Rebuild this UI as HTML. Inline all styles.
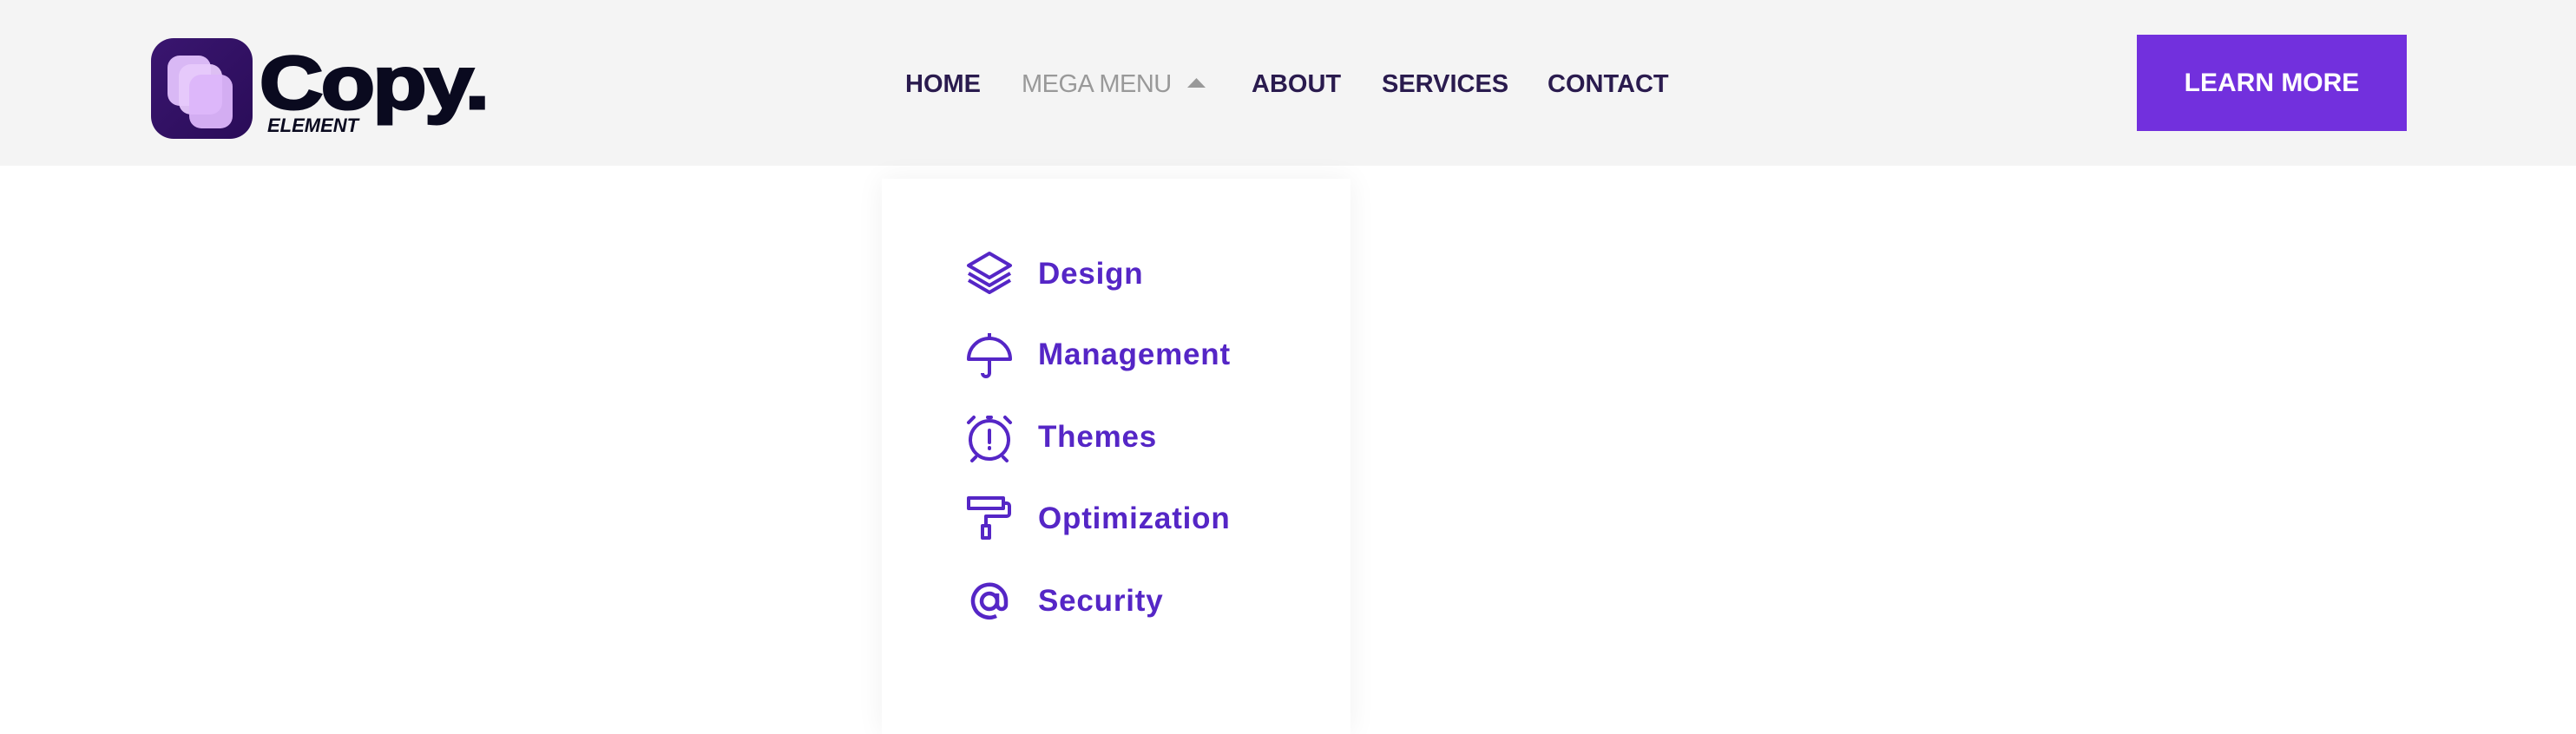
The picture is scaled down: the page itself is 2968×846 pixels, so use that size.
<!DOCTYPE html>
<html><head><meta charset="utf-8"><style>
*{margin:0;padding:0;box-sizing:border-box}
body{width:2968px;height:818px;background:#fff;position:relative;overflow:hidden;font-family:"Liberation Sans",Arial,sans-serif}
.hdr{position:absolute;left:0;top:0;width:2968px;height:191px;background:#f4f4f4}
.nav{position:absolute;top:80px;font-size:29px;font-weight:700;color:#2a1b4e;white-space:nowrap;line-height:34px}
.btn{position:absolute;left:2462px;top:40px;width:311px;height:111px;background:#7230dd;color:#fff;font-weight:700;font-size:30px;display:flex;align-items:center;justify-content:center}
.panel{position:absolute;left:1016px;top:206px;width:540px;height:640px;background:#fff;box-shadow:0 0 30px rgba(0,0,0,0.06)}
.item{position:absolute;left:1196px;font-size:35px;font-weight:700;color:#5526c6;letter-spacing:0.8px;line-height:40px}
.ic{position:absolute;left:1110px;width:60px;height:60px}
</style></head><body>
<div class="hdr"></div>
<svg style="position:absolute;left:174px;top:44px" width="117" height="116" viewBox="0 0 117 116">
<defs><linearGradient id="g" x1="0" y1="0" x2="1" y2="1"><stop offset="0" stop-color="#3a1670"/><stop offset="1" stop-color="#2a0c58"/></linearGradient></defs>
<rect x="0" y="0" width="117" height="116" rx="26" fill="url(#g)"/>
<rect x="19" y="20" width="50" height="58" rx="14" fill="#d9b8f5"/>
<rect x="32" y="30" width="50" height="58" rx="14" fill="#e7c9fb" opacity="0.95"/>
<rect x="44" y="42" width="50" height="62" rx="14" fill="#dcb6fa" opacity="0.95"/>
</svg>
<div style="position:absolute;left:299px;top:46px;font-size:86px;font-weight:700;color:#0a0a1f;line-height:100px;transform:scaleX(1.18);transform-origin:left top;letter-spacing:-2px;-webkit-text-stroke:3px #0a0a1f">Copy.</div>
<div style="position:absolute;left:308px;top:133px;font-size:22px;font-weight:700;font-style:italic;color:#0a0a1f;line-height:24px">ELEMENT</div>
<div class="nav" style="left:1043px">HOME</div>
<div class="nav" style="left:1177px;color:#999;font-weight:400;letter-spacing:-0.5px">MEGA MENU</div>
<svg style="position:absolute;left:1368px;top:90px" width="21" height="12"><polygon points="10.5,0 21,11 0,11" fill="#999"/></svg>
<div class="nav" style="left:1442px">ABOUT</div>
<div class="nav" style="left:1592px">SERVICES</div>
<div class="nav" style="left:1783px">CONTACT</div>
<div class="btn">LEARN MORE</div>
<div class="panel"></div>
<svg class="ic" style="top:286px" viewBox="0 0 60 60" fill="none" stroke="#5526c6" stroke-width="4" stroke-linejoin="round">
<path d="M30 6 L54 20 L30 34 L6 20 Z"/><path d="M6 29 L30 43 L54 29"/><path d="M6 37 L30 51 L54 37"/></svg>
<svg class="ic" style="top:380px" viewBox="0 0 60 60" fill="none" stroke="#5526c6" stroke-width="4" stroke-linejoin="round">
<path d="M30 4 V10"/><path d="M6 34 A24 24 0 0 1 54 34 Z"/><path d="M30 34 V50 A4 4 0 0 1 22 50"/></svg>
<svg class="ic" style="top:475px" viewBox="0 0 60 60" fill="none" stroke="#5526c6" stroke-width="4" stroke-linecap="round">
<circle cx="30" cy="32" r="22"/><path d="M30 21 V35"/><path d="M30 41 V42"/><path d="M6 12 L12 6"/><path d="M54 12 L48 6"/><path d="M28 6 h4"/><path d="M14 52 l-4 4"/><path d="M46 52 l4 4"/></svg>
<svg class="ic" style="top:570px" viewBox="0 0 60 60" fill="none" stroke="#5526c6" stroke-width="4" stroke-linejoin="round">
<rect x="6" y="4" width="40" height="12"/><path d="M46 10 h4 a3 3 0 0 1 3 3 v9 a3 3 0 0 1 -3 3 H26 v10"/><path d="M22 36 h8 v14 h-8 z"/></svg>
<svg class="ic" style="top:663px" viewBox="0 0 60 60" fill="none" stroke="#5526c6" stroke-width="4.5">
<circle cx="30" cy="30" r="9"/><path d="M39 21 V34 a5 5 0 0 0 10 0 V30 A19 19 0 1 0 38 47"/></svg>
<div class="item" style="top:296px">Design</div>
<div class="item" style="top:389px">Management</div>
<div class="item" style="top:484px">Themes</div>
<div class="item" style="top:578px">Optimization</div>
<div class="item" style="top:673px">Security</div>
</body></html>
